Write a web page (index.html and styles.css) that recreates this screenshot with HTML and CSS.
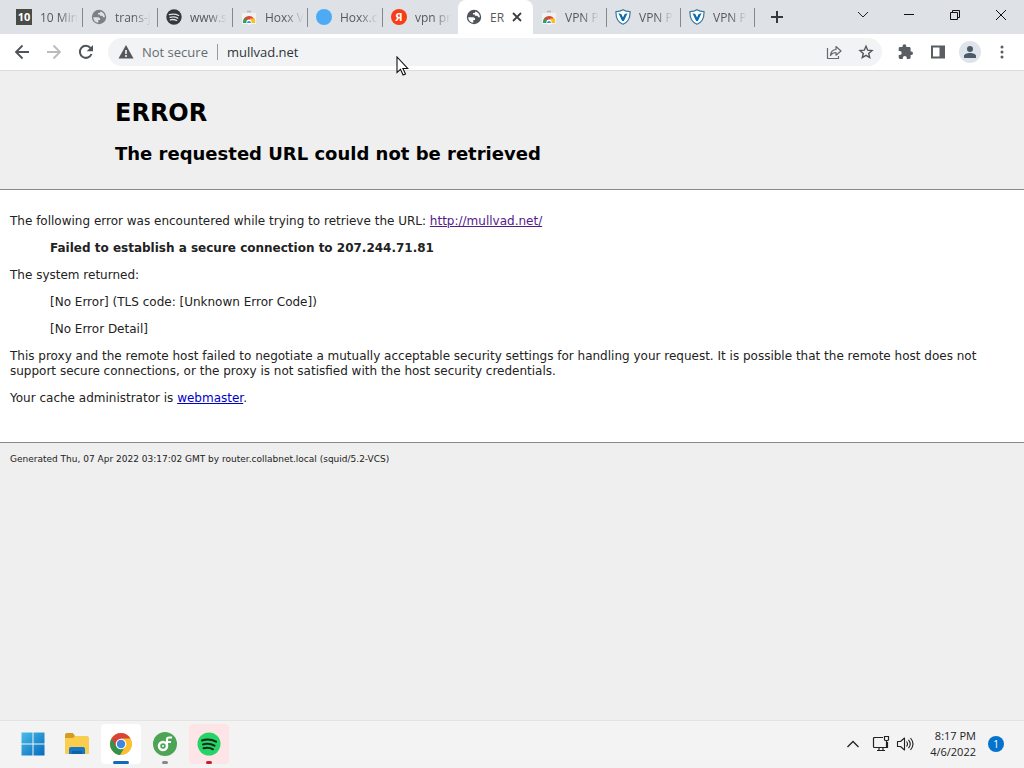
FILE: index.html
```html
<!DOCTYPE html>
<html lang="en">
<head>
  <meta charset="UTF-8">
  <meta name="viewport" content="width=device-width,initial-scale=1">
  <title>ERROR: The requested URL could not be retrieved</title>
  <link rel="stylesheet" href="styles.css">
</head>
<body>

  <!-- shared icons -->
  <svg class="sprites" aria-hidden="true">
    <symbol id="globe" viewBox="0 0 16 16">
      <circle cx="8" cy="8" r="7.200" fill="currentColor"/>
      <path d="M2.200 8.200h4.600c1.500 0 2.300.9 2.300 2.100v.8H7.300v2.600C4.400 13.500 2.300 11.200 2.200 8.200z" fill="var(--land)"/>
      <path d="M9.300 2.500c2.700.6 4.600 3 4.600 5.700h-1.700c-.3-1-1-1.400-2-1.400H8.900V5.500H7V3.900h1.400c.6 0 .9-.5.900-1.400z" fill="var(--land)"/>
    </symbol>
    <symbol id="webstore" viewBox="0 0 16 16">
      <path d="M1 4h14v11H1z" fill="#f1f1f1"/>
      <path d="M6 2.500h4" stroke="#b4b7bb" stroke-width="1.500"/>
      <path d="M2 14a6 6 0 0 1 3-6l3 4-2 2z" fill="#30a354"/>
      <path d="M3.300 10A5.500 5.500 0 0 1 13 10l-5 1z" fill="#dc4437"/>
      <path d="M9 9.500h4.500c.7 1.400.7 3 .5 4.500H9z" fill="#fbc116"/>
      <circle cx="8" cy="13" r="2.600" fill="#fff"/>
      <path d="M6 14a2 2 0 0 1 4 0z" fill="#4285f4"/>
    </symbol>
    <symbol id="shield" viewBox="0 0 16 16">
      <path d="M8 .7c2 1.400 4.500 1.900 7 1.900.3 6-1.800 10.500-7 12.700C2.800 13.100.7 8.600 1 2.600 3.500 2.600 6 2.100 8 .7z" fill="#fff" stroke="#3c789b" stroke-width="1.200"/>
      <path d="M3.500 4.300 6.300 5 8 8.500 9.700 5l2.800-.7L8.900 12H7.100z" fill="#086eb5"/>
    </symbol>
    <symbol id="spotify" viewBox="0 0 24 24">
      <circle cx="12" cy="12" r="11.500" fill="currentColor"/>
      <path d="M5 8.500c5-1.500 10-.9 14 1.200M6 12.500c4-1.200 8-.7 11.500 1.200M6.500 16.200c3.500-.9 6.500-.6 9.500 1.100" fill="none" stroke="var(--stripe)" stroke-width="2" stroke-linecap="round"/>
    </symbol>
  </svg>

  <header class="browser">
    <div class="tab-strip">
      <nav class="tabs" aria-label="Open tabs">
        <a class="tab" href="#"><span class="ten">10</span><span class="tab-title">10 Min</span></a>
        <a class="tab" href="#"><svg class="favicon grey"><use href="#globe"/></svg><span class="tab-title">trans-j</span></a>
        <a class="tab" href="#"><svg class="favicon dark"><use href="#spotify"/></svg><span class="tab-title">www.s</span></a>
        <a class="tab" href="#"><svg class="favicon"><use href="#webstore"/></svg><span class="tab-title">Hoxx V</span></a>
        <a class="tab" href="#"><span class="blue-dot"></span><span class="tab-title">Hoxx.c</span></a>
        <a class="tab before-active" href="#"><span class="yandex">Я</span><span class="tab-title">vpn pr</span></a>
        <div class="tab active">
          <svg class="favicon slate"><use href="#globe"/></svg>
          <a class="tab-title" href="#">ER</a>
          <button class="close-tab" type="button" aria-label="Close tab">
            <svg width="10" height="10" viewBox="0 0 10 10"><path d="M1 1l8 8M9 1L1 9" stroke="#3c4043" stroke-width="1.800"/></svg>
          </button>
        </div>
        <a class="tab narrow" href="#"><svg class="favicon"><use href="#webstore"/></svg><span class="tab-title">VPN P</span></a>
        <a class="tab narrow" href="#"><svg class="favicon"><use href="#shield"/></svg><span class="tab-title">VPN P</span></a>
        <a class="tab narrow" href="#"><svg class="favicon"><use href="#shield"/></svg><span class="tab-title">VPN P</span></a>
      </nav>
      <button class="new-tab" type="button" aria-label="New tab">
        <svg width="14" height="14" viewBox="0 0 14 14"><path d="M7 1v12M1 7h12" stroke="#35383c" stroke-width="2"/></svg>
      </button>
      <div class="window-buttons">
        <button type="button" aria-label="Search tabs"><svg width="12" height="12" viewBox="0 0 12 12"><path d="M1 3l5 5 5-5" fill="none" stroke="#222"/></svg></button>
        <button type="button" aria-label="Minimize"><svg width="12" height="12" viewBox="0 0 12 12"><path d="M1 5.500h10" stroke="#111"/></svg></button>
        <button type="button" aria-label="Restore"><svg width="12" height="12" viewBox="0 0 12 12"><path d="M1.500 3.500h7v7h-7zM3.500 3.500v-2h7v7h-2" fill="none" stroke="#111"/></svg></button>
        <button type="button" aria-label="Close"><svg width="12" height="12" viewBox="0 0 12 12"><path d="M1 1l10 10M11 1L1 11" stroke="#111"/></svg></button>
      </div>
    </div>

    <div class="toolbar">
      <div class="nav-buttons">
        <button type="button" aria-label="Back"><svg width="16" height="16" viewBox="0 0 16 16"><path d="M15 8H2M8.500 1.500L2 8l6.500 6.500" fill="none" stroke="#505357" stroke-width="1.800"/></svg></button>
        <button type="button" aria-label="Forward"><svg width="16" height="16" viewBox="0 0 16 16"><path d="M1 8h13M7.500 1.500L14 8l-6.500 6.500" fill="none" stroke="#b9bbbd" stroke-width="1.800"/></svg></button>
        <button type="button" aria-label="Reload"><svg width="16" height="16" viewBox="0 0 16 16"><path d="M13.500 10A6 6 0 1 1 12.500 4" fill="none" stroke="#505357" stroke-width="2"/><path d="M15 1v6.300H8.700z" fill="#505357"/></svg></button>
      </div>
      <div class="omnibox">
        <svg class="warning" width="16" height="16" viewBox="0 0 16 16"><path d="M8 1l7.500 13.500H.5z" fill="#54575b"/><path d="M8 6v4M8 11v2" stroke="#fff" stroke-width="1.500"/></svg>
        <label class="not-secure" for="url">Not secure</label>
        <input class="url" id="url" type="text" value="mullvad.net">
        <button type="button" aria-label="Share"><svg width="16" height="16" viewBox="0 0 16 16"><path d="M1.500 4v10.500h11V12M4.500 11.500c.3-3.700 2-5.800 5.500-6V2.500L15 7l-5 4.200V8.500c-2.600 0-4.300 1-5.500 3z" fill="none" stroke="#66696d" stroke-width="1.200" stroke-linejoin="round"/></svg></button>
        <button type="button" aria-label="Bookmark this page"><svg width="16" height="16" viewBox="0 0 16 16"><path d="M8 2.200l1.700 4 4.300.4-3.300 2.800 1 4.200L8 11.400l-3.700 2.200 1-4.200L2 6.600l4.300-.4z" fill="none" stroke="#53565a" stroke-width="1.400"/></svg></button>
      </div>
      <div class="actions">
        <button type="button" aria-label="Extensions"><svg width="16" height="16" viewBox="0 0 16 16"><path d="M13.600 7.500h-1V4.300c0-.8-.6-1.400-1.400-1.400H8.300V2.200a1.900 1.900 0 0 0-3.800 0v.7H2.100C1.300 2.900.7 3.500.7 4.300v2.600h1a2 2 0 0 1 0 4h-1v2.700c0 .8.600 1.400 1.400 1.400h2.700v-1a2 2 0 0 1 4 0v1h2.400c.8 0 1.400-.6 1.400-1.400V11h1a1.800 1.800 0 0 0 0-3.500z" fill="#5a5d61"/></svg></button>
        <button type="button" aria-label="Side panel"><svg width="16" height="16" viewBox="0 0 16 16"><path d="M1 1.500h14v13H1zM3 3.500v9h6.500v-9z" fill="#5a5d61" fill-rule="evenodd"/></svg></button>
        <button class="profile" type="button" aria-label="Profile"><svg width="14" height="14" viewBox="0 0 14 14"><circle cx="7" cy="4" r="3" fill="#4b5a69"/><path d="M1 13v-2c0-2 3-3 6-3s6 1 6 3v2z" fill="#4b5a69"/></svg></button>
        <button type="button" aria-label="Menu"><svg width="16" height="16" viewBox="0 0 16 16" fill="#5a5d61"><circle cx="8" cy="3" r="1.500"/><circle cx="8" cy="8" r="1.500"/><circle cx="8" cy="13" r="1.500"/></svg></button>
      </div>
    </div>
  </header>

  <main class="page">
    <div class="titles">
      <h1>ERROR</h1>
      <h2>The requested URL could not be retrieved</h2>
    </div>
    <div class="content">
      <p>The following error was encountered while trying to retrieve the URL: <a class="visited" href="http://mullvad.net/">http://mullvad.net/</a></p>
      <blockquote><p><b>Failed to establish a secure connection to 207.244.71.81</b></p></blockquote>
      <p>The system returned:</p>
      <blockquote>
        <p>[No Error] (TLS code: [Unknown Error Code])</p>
        <p>[No Error Detail]</p>
      </blockquote>
      <p>This proxy and the remote host failed to negotiate a mutually acceptable security settings for handling your request. It is possible that the remote host does not support secure connections, or the proxy is not satisfied with the host security credentials.</p>
      <p>Your cache administrator is <a href="#">webmaster</a>.</p>
    </div>
    <div class="generated">
      <p>Generated Thu, 07 Apr 2022 03:17:02 GMT by router.collabnet.local (squid/5.2-VCS)</p>
    </div>
  </main>

  <footer class="taskbar">
    <div class="apps">
      <button class="app" type="button" aria-label="Start">
        <svg width="24" height="24" viewBox="0 0 24 24"><defs><linearGradient id="win" x1="0" y1="0" x2="1" y2="1"><stop stop-color="#48bde9"/><stop offset="1" stop-color="#0669bd"/></linearGradient></defs><path d="M.5.500h11v11H.5zM12.500.500h11v11h-11zM.5 12.500h11v11H.5zM12.500 12.500h11v11h-11z" fill="url(#win)"/></svg>
      </button>
      <button class="app" type="button" aria-label="File Explorer">
        <svg width="26" height="24" viewBox="0 0 26 24"><path d="M1 3q0-2 2-2h6l2 3v4H1z" fill="#d69b20"/><path d="M1 6h8l2-2h12q2 0 2 2v15q0 1-1 1H2q-1 0-1-1z" fill="#f9cd4d"/><path d="M5 22v-5q0-2 2-2h12q2 0 2 2v5z" fill="#1877c5"/><path d="M8 19h10v3H8z" fill="#1160a4"/></svg>
      </button>
      <button class="app current" type="button" aria-label="Google Chrome">
        <svg width="24" height="24" viewBox="0 0 24 24"><circle cx="12" cy="12" r="11" fill="#fbc02f"/><path d="M12 12L2.500 6.500A11 11 0 0 0 11 23l5.500-9z" fill="#32914b"/><path d="M2.500 6.500A11 11 0 0 1 21.500 6.500H12L7.200 14.700z" fill="#d84437"/><circle cx="12" cy="12" r="5.300" fill="#fff"/><circle cx="12" cy="12" r="4.200" fill="#4285dc"/></svg>
      </button>
      <button class="app running" type="button" aria-label="Music downloader">
        <svg width="24" height="24" viewBox="0 0 24 24"><circle cx="12" cy="12" r="12" fill="#4da454"/><circle cx="10" cy="14" r="4" fill="none" stroke="#fff" stroke-width="2.500"/><circle cx="10" cy="14" r="1" fill="#fff"/><path d="M14 14V7.500q0-2 2-2h3M14 10h4" fill="none" stroke="#fff" stroke-width="2.200"/></svg>
      </button>
      <button class="app alert" type="button" aria-label="Spotify"><svg class="spotify"><use href="#spotify"/></svg></button>
    </div>
    <div class="tray">
      <button type="button" aria-label="Show hidden icons"><svg width="14" height="14" viewBox="0 0 14 14"><path d="M1.500 10L7 4.500l5.500 5.500" fill="none" stroke="#222" stroke-width="1.300"/></svg></button>
      <button type="button" aria-label="Network"><svg width="18" height="18" viewBox="0 0 18 18"><path d="M11 2.500H2.500q-1 0-1 1v8q0 1 1 1h13V7M5 15.500h8M7 12.500v3M11 12.500v3M12.500 1.500h4v3q0 1-1 1h-2q-1 0-1-1zM14.500 5.500v7" fill="none" stroke="#222" stroke-width="1.200"/></svg></button>
      <button type="button" aria-label="Volume"><svg width="18" height="18" viewBox="0 0 18 18"><path d="M1.500 6.500h3L8.500 3v12l-4-3.500h-3zM10.500 6.500q2 2.500 0 5M12.500 4.800q3.500 4.200 0 8.400M14.500 3q5 6 0 12" fill="none" stroke="#222" stroke-width="1.100" stroke-linejoin="round"/></svg></button>
      <div class="clock"><time>8:17 PM</time><time>4/6/2022</time></div>
      <button class="notifications" type="button" aria-label="1 notification">1</button>
    </div>
  </footer>

  <svg class="cursor" width="13" height="20" viewBox="0 0 13 20" aria-hidden="true"><path d="M1 1v15.500l3.500-3.200 2.600 5.700 2.400-1.100-2.600-5.400h4.800z" fill="#fff" stroke="#111" stroke-width="1.100"/></svg>

</body>
</html>
```
FILE: styles.css
```css
:root {
  --strip: #dee1e6;
  --page: #efefef;
  --ui: "Open Sans", "Noto Sans", sans-serif;
}
* { box-sizing: border-box; }
body {
  margin: 0;
  min-height: 100vh;
  display: flex;
  flex-direction: column;
  font-family: var(--ui);
  background: var(--page);
}
button {
  border: none;
  background: none;
  padding: 0;
  font-family: inherit;
  display: flex;
  align-items: center;
  justify-content: center;
}
.sprites { display: none; }

/* Tab strip */
.tab-strip {
  height: 34px;
  display: flex;
  background: var(--strip);
  padding-left: 8px;
}
.tabs { display: flex; min-width: 0; }
.tab {
  position: relative;
  width: 75px;
  display: flex;
  align-items: center;
  gap: 8px;
  padding: 0 0 0 8px;
  font-size: 12px;
  color: #55595e;
  text-decoration: none;
}
.tab.narrow { width: 74px; }
.tab::after {
  content: "";
  position: absolute;
  right: 0;
  top: 8px;
  height: 19px;
  border-right: 1px solid #85898e;
}
.tab.before-active::after, .tab.active::after { border: none; }
.tab-title {
  white-space: nowrap;
  color: inherit;
  text-decoration: none;
  -webkit-mask-image: linear-gradient(to right, #000 50%, transparent);
  mask-image: linear-gradient(to right, #000 50%, transparent);
}
.tab.active {
  background: #fff;
  border-radius: 8px 8px 0 0;
}
.active .tab-title {
  -webkit-mask-image: none;
  mask-image: none;
}
.favicon { width: 16px; height: 16px; flex: none; }
.grey { color: #7e8184; --land: #dee1e6; }
.slate { color: #505357; --land: #fff; }
.dark { color: #35393e; --stripe: #dee1e6; }
.ten, .yandex, .blue-dot {
  width: 16px;
  height: 16px;
  flex: none;
  line-height: 16px;
  font-size: 11px;
  text-align: center;
  color: #fff;
  font-weight: 700;
}
.ten { background: #484b46; }
.yandex { background: #f83c13; border-radius: 50%; }
.blue-dot { background: #4dabf5; border-radius: 50%; }
.new-tab { width: 28px; margin-left: 8px; }
.window-buttons {
  display: flex;
  margin-left: auto;
  height: 29px;
}
.window-buttons button { width: 46px; }

/* Toolbar */
.toolbar {
  height: 37px;
  display: flex;
  align-items: center;
  background: #fff;
  border-bottom: 1px solid #dadce0;
  padding: 0 6px 0 14px;
}
.nav-buttons { display: flex; gap: 16px; margin-right: 14px; }
.omnibox {
  flex: 1;
  height: 28px;
  display: flex;
  align-items: center;
  gap: 16px;
  padding: 0 8px 0 10px;
  border-radius: 14px;
  background: #f1f3f4;
}
.warning { margin-right: -8px; }
.not-secure {
  font-size: 13px;
  line-height: 16px;
  color: #686b70;
  padding-right: 9px;
  border-right: 1px solid #989b9f;
}
.url {
  flex: 1;
  min-width: 0;
  margin-left: -7px;
  padding: 0;
  border: none;
  outline: none;
  background: none;
  font-family: inherit;
  font-size: 13px;
  color: #303338;
}
.actions { display: flex; align-items: center; margin-left: 8px; }
.actions button { width: 32px; height: 24px; }
.actions .profile {
  width: 22px;
  height: 22px;
  margin: 0 5px;
  border-radius: 50%;
  background: #dfe4ea;
}

/* Error page */
.page {
  flex: 1;
  font-family: Verdana, "DejaVu Sans", sans-serif;
  font-size: 12px;
  line-height: 15px;
  color: #222;
}
.titles {
  padding: 27px 10px 24px 115px;
  border-bottom: 1px solid #888;
  color: #000;
}
h1 { margin: 0; font-size: 24px; line-height: 30px; }
h2 { margin: 15px 0 0; font-size: 18px; line-height: 22px; }
.content {
  padding: 24px 10px 36px;
  background: #fff;
  border-bottom: 1px solid #888;
}
p { margin: 0 0 12px; }
.content p:last-child { margin-bottom: 0; }
blockquote { margin: 0 40px 12px; }
.page a { color: #0000c8; }
.page .visited { color: #551a8b; }
.generated { padding: 9px 10px; font-size: 9px; }

/* Taskbar */
.taskbar {
  height: 48px;
  display: flex;
  align-items: center;
  justify-content: space-between;
  padding: 0 20px 2px 13px;
  background: #f3f3f3;
  border-top: 1px solid #e3e3e3;
}
.apps { display: flex; gap: 4px; }
.app {
  position: relative;
  width: 40px;
  height: 40px;
  border-radius: 4px;
}
.app::after {
  position: absolute;
  bottom: 0;
  width: 6px;
  height: 3px;
  border-radius: 2px;
}
.current { background: #fff; }
.current::after { content: ""; width: 16px; background: #1169b8; }
.running::after { content: ""; background: #888; }
.alert { background: #fde4e6; }
.alert::after { content: ""; background: #c3202d; }
.spotify { width: 24px; height: 24px; color: #25d366; --stripe: #10281a; }
.tray { display: flex; align-items: center; gap: 8px; }
.tray button:first-child { margin-right: 4px; }
.tray button:nth-child(3) { margin-left: -2px; }
.clock {
  display: flex;
  flex-direction: column;
  align-items: flex-end;
  margin-left: 8px;
  font-size: 11px;
  line-height: 16px;
  color: #222;
}
.tray .notifications {
  width: 16px;
  height: 16px;
  margin-left: 4px;
  border-radius: 50%;
  background: #0573cc;
  color: #fff;
  font-size: 10px;
}

.cursor { position: absolute; left: 396px; top: 56px; }
```
